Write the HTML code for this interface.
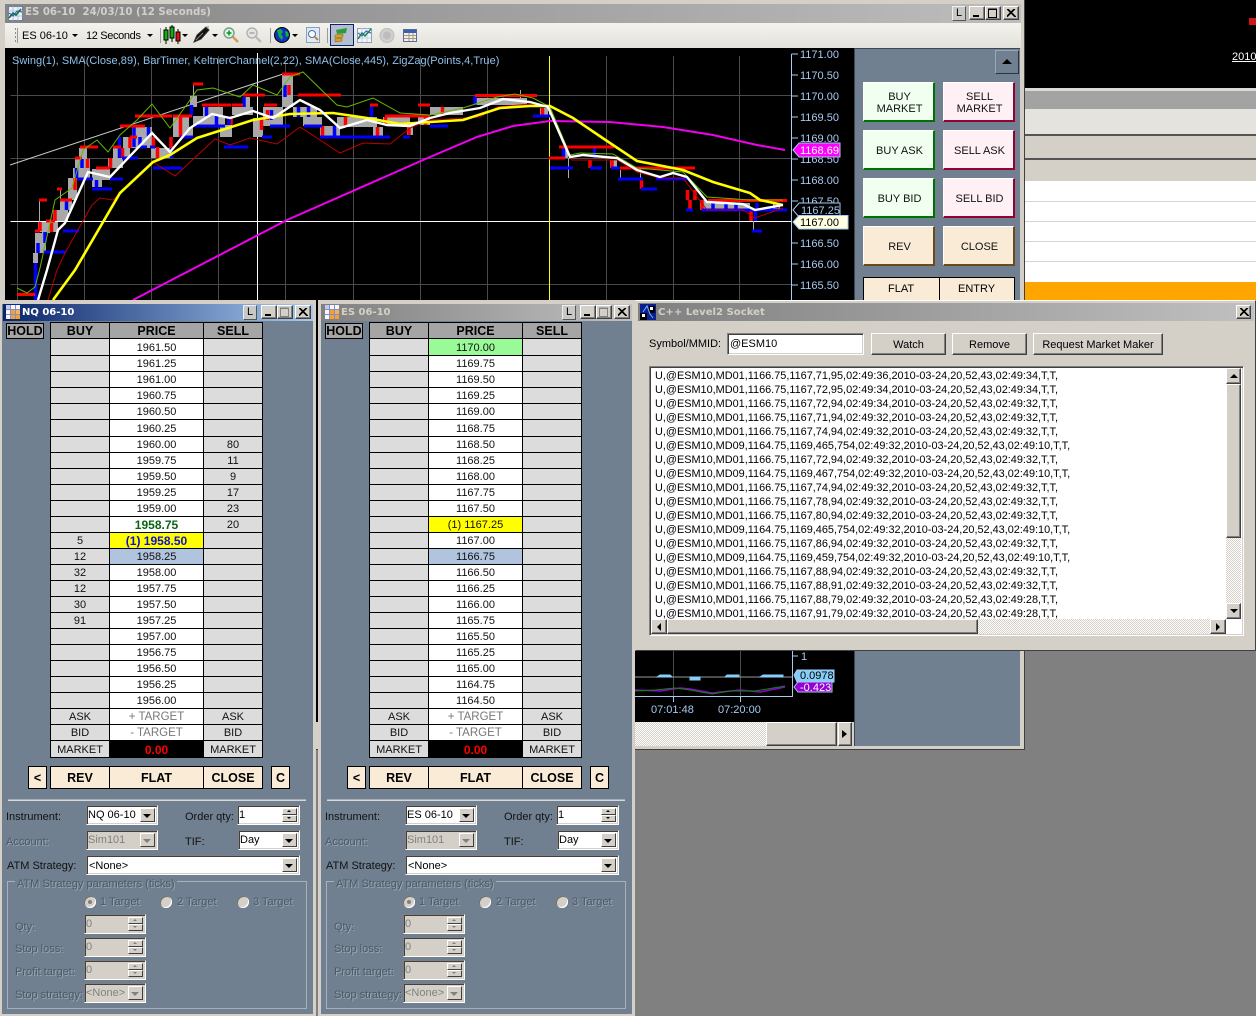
<!DOCTYPE html>
<html><head><meta charset="utf-8"><title>Trading</title>
<style>
html,body{margin:0;padding:0;width:1256px;height:1016px;overflow:hidden;background:#808080}
body{position:relative;font:11px "Liberation Sans",sans-serif;color:#000}
div,span,table,svg{position:absolute}
td,th{position:static}
.t{white-space:nowrap;line-height:14px}
.r{border:1px solid;border-color:#fff #404040 #404040 #fff;box-shadow:inset -1px -1px #808080;background:#d4d0c8;box-sizing:border-box}
.s{border:1px solid;border-color:#808080 #fff #fff #808080;box-shadow:inset 1px 1px #404040,inset -1px -1px #d4d0c8;background:#fff;box-sizing:border-box}
.dis{background:#d4d0c8;color:#808080}
.v{left:1px;top:2px;white-space:nowrap;line-height:14px}
.n{left:2px;top:3px}
.ab{right:2px;top:2px;bottom:2px;width:15px;border:1px solid;border-color:#fff #404040 #404040 #fff;background:#d4d0c8;box-sizing:border-box}
.ab:after,.up:after,.dn:after{content:"";position:absolute;width:0;height:0;border-left:4px solid transparent;border-right:4px solid transparent;border-top:4px solid #000;left:2px;top:5px}
.dis .ab:after{border-top-color:#808080}
.sp{right:2px;top:2px;width:15px;height:14px}
.up,.dn{left:0;width:15px;height:7px;background:#d4d0c8;border:1px solid;border-color:#fff #404040 #404040 #fff;box-sizing:border-box}
.up{top:0}.dn{top:7px}
.up:after{border-left-width:2px;border-right-width:2px;border-top:0;border-bottom:2px solid #000;left:4px;top:1px}
.dn:after{border-left-width:2px;border-right-width:2px;border-top-width:2px;left:4px;top:1px}
.dis .up:after{border-bottom-color:#808080}.dis .dn:after{border-top-color:#808080}
.L{border:1px solid;border-color:#eee #555 #555 #eee;background:#c8c8c4;box-sizing:border-box;text-align:center;font-size:11px;line-height:13px;height:15px;width:14px}
.wb{width:16px;height:14px}
.lb{color:#111;white-space:nowrap;line-height:14px}
.d{color:#4d5866;text-shadow:1px 1px 0 rgba(190,200,210,.55);white-space:nowrap;line-height:14px}
table.g{border-spacing:1px;background:#000;table-layout:fixed;left:50px;top:322px;width:213px;border-collapse:separate}
table.g td{padding:2px 0 0;height:13px;line-height:13px;text-align:center;font-size:11px;background:#dcdcdc;overflow:hidden;color:#111}
table.g td:nth-child(1),table.g td:nth-child(3){width:58px}
table.g td:nth-child(2){width:93px;background:#fff}
table.g tr.hd td{background:#a5a5a5;font-weight:bold;font-size:12.5px;color:#000}
table.g tr.x td{height:14px}
table.g td.gt{color:#777;font-size:11.5px}
table.g td.mk{background:#000;color:#f00;font-weight:bold;font-size:12px}
.sl{color:#1d3f7c}
.hold{left:6px;top:323px;width:38px;height:16px;border:1px solid #000;background:#a5a5a5;box-sizing:border-box;font:bold 12.5px/15px "Liberation Sans",sans-serif;text-align:center}
.ob{top:766px;height:23px;background:#faebd7;border:1px solid #000;box-sizing:border-box;font:bold 12.5px/23px "Liberation Sans",sans-serif;text-align:center}
.btn{box-sizing:border-box;text-align:center;font-size:11px;line-height:12px;color:#111;border:1px solid;display:flex;align-items:center;justify-content:center;padding:2px 0 0 2px}
.bg{background:#f0fff0;border-color:#fff #007000 #007000 #fff;border-width:1px 2px 2px 1px}
.bp{background:#fff0f5;border-color:#fff #900030 #900030 #fff;border-width:1px 2px 2px 1px}
.ba{background:#faebd7;border-color:#fff #6b4a20 #6b4a20 #fff;border-width:1px 2px 2px 1px}
.tb{font-family:"DejaVu Sans",sans-serif;font-weight:bold;line-height:14px;white-space:nowrap}
.dz{background:conic-gradient(#fff 25%,#d4d0c8 0 50%,#fff 0 75%,#d4d0c8 0) 0 0/2px 2px}
.rad{width:12px;height:12px;border-radius:50%;background:#d4d0c8;box-shadow:inset 1px 1px #6d6d6d,inset -1px -1px #fff}
.pre{left:655px;color:#000;white-space:pre;font-size:10.9px;line-height:14px;letter-spacing:0}
svg text{font-family:"Liberation Sans",sans-serif;font-size:11px}
</style></head><body>

<!-- background right window -->
<div style="left:1024px;top:0;width:232px;height:300px;background:#000"></div>
<div style="left:1249px;top:18px;width:7px;height:7px;background:#d01515"></div>
<div class="t" style="left:1232px;top:50px;color:#fff;text-decoration:underline">2010</div>
<div style="left:1024px;top:88px;width:232px;height:3px;background:#dcdcd6"></div>
<div style="left:1024px;top:91px;width:232px;height:18px;background:#a3a3a3"></div>
<div style="left:1024px;top:109px;width:232px;height:26px;background:#e4e3de"></div>
<div style="left:1024px;top:134px;width:232px;height:2px;background:#555"></div>
<div style="left:1024px;top:136px;width:232px;height:23px;background:#d4d0c8"></div>
<div style="left:1024px;top:158px;width:232px;height:2px;background:#555"></div>
<div style="left:1024px;top:160px;width:232px;height:21px;background:#d4d0c8"></div>
<div style="left:1024px;top:181px;width:232px;height:101px;background:#fff"></div>
<div style="left:1024px;top:201px;width:232px;height:1px;background:#d4d4d4"></div>
<div style="left:1024px;top:221px;width:232px;height:1px;background:#d4d4d4"></div>
<div style="left:1024px;top:241px;width:232px;height:1px;background:#d4d4d4"></div>
<div style="left:1024px;top:261px;width:232px;height:1px;background:#d4d4d4"></div>
<div style="left:1024px;top:282px;width:232px;height:18px;background:#ffa500"></div>

<!-- chart window -->
<div style="left:0;top:0;width:1025px;height:750px;background:#d4d0c8;border-right:1px solid #404040;border-bottom:1px solid #404040;box-sizing:border-box"></div>
<div style="left:5px;top:4px;width:1016px;height:19px;background:linear-gradient(90deg,#858585,#bdbdbd)"></div>
<div style="left:5px;top:23px;width:1016px;height:25px;background:linear-gradient(#f4f3ee,#e2e1da)"></div>
<div style="left:5px;top:48px;width:849px;height:674px;background:#000"></div>
<div style="left:854px;top:48px;width:166px;height:698px;background:#708090;box-shadow:inset 1px 1px #3a4654"></div>

<svg style="left:8px;top:6px" width="15" height="15" viewBox="0 0 15 15"><rect x=".5" y=".5" width="14" height="14" fill="#eef" stroke="#6a7f9a"/><path d="M.5 5h14M.5 10h14M5 .5v14M10 .5v14" stroke="#b9c4d6"/><path d="M1 12l4-5 3 2 5-6" fill="none" stroke="#0a7a2a" stroke-width="1.6"/><path d="M1 7l4 3 4-5 5 1" fill="none" stroke="#2050c0"/></svg>
<div class="tb" style="left:25px;top:6px;color:#d4d0c8;font-size:10.2px">ES 06-10&nbsp; 24/03/10 (12 Seconds)</div>
<div class="L" style="left:952px;top:6px">L</div>
<div class="r wb" style="left:969px;top:6px"><svg style="left:3px;top:8px" width="7" height="2"><rect width="6" height="2"/></svg></div>
<div class="r wb" style="left:985px;top:6px"><svg style="left:2px;top:1px" width="10" height="10"><path d="M.5 1.500h8v8h-8zM0 1h9" fill="none" stroke="#000"/></svg></div>
<div class="r wb" style="left:1003px;top:6px"><svg style="left:3px;top:2px" width="9" height="8"><path d="M0 0l8 8M8 0l-8 8M1 0l8 8M7 0l-8 8" stroke="#000"/></svg></div>

<!-- toolbar -->
<svg style="left:5px;top:23px" width="420" height="25" viewBox="5 23 420 25">
<path d="M15.5 28v2M15.5 32v2M15.5 36v2M15.5 40v2" stroke="#8a8a8a"/>
<path d="M160.5 28v15M270.5 28v15M327.5 28v15M17.5 28v15" stroke="#9a9a96"/>
<path d="M72 34h6l-3 3zM147 34h6l-3 3zM182 34h6l-3 3zM212 34h6l-3 3zM292 34h6l-3 3z"/>
<path d="M166 27v17" stroke="#000"/><rect x="164" y="30" width="4" height="10" fill="#10b010" stroke="#000"/>
<path d="M172 25v17" stroke="#000"/><rect x="170" y="27" width="4" height="11" fill="#10b010" stroke="#000"/>
<path d="M178 29v15" stroke="#000"/><rect x="176" y="32" width="4" height="9" fill="#e01010" stroke="#000"/>
<path d="M194 42l3-7 9-8 3 3-8 9z" fill="#111" stroke="#333"/><path d="M206 27l3-1-1 3" fill="#999"/><path d="M196 40l7-7" stroke="#888"/>
<circle cx="229" cy="33" r="5" fill="#e2f4e6" stroke="#7a9a8a" stroke-width="1.4"/><path d="M226.500 33h5M229 30.500v5" stroke="#0a9a20" stroke-width="1.6"/><path d="M233 37l5 5" stroke="#d99a50" stroke-width="2.4"/>
<circle cx="252" cy="33" r="5" fill="#e4e4e4" stroke="#b0b0b0" stroke-width="1.4"/><path d="M249.500 33h5" stroke="#aaa" stroke-width="1.6"/><path d="M256 37l5 5" stroke="#bbb" stroke-width="2.4"/>
<circle cx="282" cy="35" r="7.500" fill="#1030c0" stroke="#000"/><path d="M277 30l4-1 2 3-2 2 2 3-1 3-3-3zM285 31l3 1 1 4-3 1z" fill="#10b040"/>
<rect x="306.500" y="27.500" width="13" height="15" fill="#dfeaf5" stroke="#8aa0c0"/><circle cx="312" cy="34" r="3.500" fill="#fff" stroke="#4070a0"/><path d="M315 37l3 3" stroke="#d08030" stroke-width="2"/>
<rect x="330.500" y="24.500" width="23" height="21" fill="#b5bdd2" stroke="#0a246a"/>
<path d="M336 30l11-2-1 5-9 1z" fill="#2a9a3a"/><path d="M335 35l8-1v3l-8 1zM335 39l7-1v3l-7 1z" fill="#d8a020" stroke="#8a6010" stroke-width=".5"/>
<rect x="357.500" y="28.500" width="14" height="14" fill="#f2f4fa" stroke="#8fa0ba"/><path d="M358 33h13M358 38h13M362 28v14M367 28v14" stroke="#c6cedd"/><path d="M358 39l4-6 3 3 6-7" fill="none" stroke="#0a8a40" stroke-width="1.4"/><path d="M358 33l4 3 4-5 5 2" fill="none" stroke="#3060c0"/>
<circle cx="387" cy="35.500" r="7" fill="#cfcfcf" stroke="#bcbcbc"/><circle cx="387" cy="35.500" r="4" fill="#bdbdbd"/>
<rect x="403.500" y="29.500" width="13" height="12" fill="#f4efe0" stroke="#5a6a9a"/><rect x="404" y="30" width="12" height="3" fill="#3a60b0"/><path d="M404 35.500h12M404 38.500h12M409 33v8M413 33v8" stroke="#a09a8a"/>
</svg>
<div class="t" style="left:22px;top:29px">ES 06-10</div>
<div class="t" style="left:86px;top:29px;letter-spacing:-.35px">12 Seconds</div>

<!-- chart -->
<svg style="left:0;top:0" width="856" height="750" viewBox="0 0 856 750">
<g stroke="#4a4a4a" fill="none">
<path d="M10.500 95.500H791M10.500 158.500H791M10.500 284.500H791"/>
<path d="M17.500 56V300M84.500 56V300M151.500 56V300M218.500 56V300M285.500 56V300M353.500 56V300M420.500 56V300M487.500 56V300M606.500 56V300M673.500 56V300M739.500 56V300"/>
<path d="M673.500 650V697M740.500 650V697"/>
</g>
<path d="M10.500 221.500H791" stroke="#fff"/>
<path d="M257.500 53V300" stroke="#fff"/>
<path d="M549.500 56V300" stroke="#ff0"/>
<path d="M10 165L283 74" stroke="#c8c8c8" stroke-width="1"/>

<!-- wicks -->
<path d="M39.500 200V222M60.500 189V200M118.500 137V147M193.500 85V100M285.500 74V90M568.500 158V178M620.500 170V180M694.500 190V200M753.500 221V231M520.500 90V98M640.500 168V178M113.500 147V158" stroke="#aaa" fill="none"/>
<!-- gray blocks -->
<path fill="#a9a9a9" d="M33 253h5v10h-5zM35 233h11v20h-11zM38 222h4v10h-4zM42 222h8v11h-8zM46 222h12v10h-12zM53 210h15v11h-15zM60 201h12v9h-12zM68 178h9v22h-9zM73 168h17v10h-17zM75 159h15v9h-15zM79 148h8v11h-8zM92 169h18v11h-18zM92 180h10v7h-10zM108 158h15v10h-15zM113 148h17v10h-17zM123 137h29v11h-29zM132 127h20v10h-20zM151 148h22v10h-22zM173 127h20v10h-20zM173 117h16v10h-16zM190 96h7v11h-7zM193 116h32v10h-32zM203 107h20v9h-20zM220 125h12v12h-12zM232 107h21v8h-21zM243 97h7v10h-7zM253 118h10v19h-10zM263 107h20v19h-20zM282 75h11v32h-11zM293 107h24v10h-24zM303 117h19v9h-19zM320 126h20v11h-20zM337 117h40v10h-40zM373 127h10v10h-10zM383 117h27v8h-27zM407 127h6v8h-6zM418 115h12v10h-12zM430 107h33v8h-33zM475 98h52v7h-52zM540 108h8v7h-8zM562 148h6v10h-6zM610 160h7v8h-7zM700 200h7v10h-7zM707 203h43v7h-43zM773 203h7v7h-7z"/>
<!-- red bars -->
<path fill="none" stroke="#f00" stroke-width="3.500" d="M40 222V231M51.500 223V232M55 210V221M75 178V190M87.500 159V168M110.500 158V168M122.500 148V158M130 137V148M153.500 137V147M157.500 147V158M171 137V148M180.500 117V137M231 116V125M261.500 118V130M267.500 110V120M289 85V95M322.500 126V137M345.500 117V127M377.500 127V137M385.500 117V125M409 127V135M425.500 115V125M442.500 107V115M542.500 108V115M590 160V168M612 160V168M641.500 180V189M687.500 190V200M690 200V210M695 190V200M702 200V210M751 210V221M777.500 205V208"/>
<!-- blue bars -->
<path fill="none" stroke="#00f" stroke-width="3.500" d="M35.500 263V300M38 243V253M45 232V243M66.500 200V210M76.500 168V178M82 159V168M96.500 180V187M119.500 137V158M134 127V147M140 137V147M148.500 127V137M171.500 148V158M191.500 105V115M206.500 107V116M216.500 116V126M229 116V125M244 97V107M271.500 110V120M285 85V97M298.500 107V117M308.500 107V117M334.500 126V137M371.500 105V117M475 96V105M563.500 148V158M594.500 148V158M713 203V210M726 203V210M736 203V210M755.500 210V221M757 203V210M776.500 203V208"/>
<!-- red dashes -->
<path fill="none" stroke="#f00" stroke-width="3" d="M17 294.500H35M35 231H40M46 221H55M39 200H47M57 189H62M60 200H72M75 158H82M80 147H98M96 168H110M113 147H121M130 137H137M120 126H145M135 116H172M173 116H192M193 84H203M202 105H231M232 105H243M243 95H265M264 105H277M282 74H300M298 95H341M370 105H378M418 105H430M385 116H430M475 95.500H537M559 147H614M549 158H565M620 168H695M708 200.500H787"/>
<!-- blue dashes -->
<path fill="none" stroke="#00f" stroke-width="3" d="M43 252H66M63 231H79M77 179H93M92 189H112M110 179H123M122 158H138M140 147H147M150 147H155M153 168H182M180 137H193M195 126H225M224 147H248M262 137H272M270 126H290M304 126H322M320 137H390M403 137H410M430 126H448M533 116H550M550 168H573M590 168H602M611 168H620M618 179H643M641 189H657M656 179H687M686 210H693M702 210H787M752 231H762"/>
<!-- lines -->
<polyline fill="none" stroke="#b80000" stroke-width="1" points="48,300 57,270 65,253 92,205 100,198 113,200 153,162 175,176 215,139 230,145 250,138 277,144 300,127 340,153 363,143 390,144 410,128 430,120 480,117 497,107 530,104 550,108 572,160 617,160 637,172 660,178 683,178 707,210 743,210 755,218 783,208"/>
<polyline fill="none" stroke="#66b800" stroke-width="1" points="17,288 27,293 35,287 40,268 55,200 72,188 83,150 97,140 108,152 120,135 137,120 152,104 170,128 190,100 197,90 213,88 240,97 253,85 277,95 290,77 303,72 337,105 347,107 373,98 400,113 430,115 463,108 497,97 515,94 533,98 550,107 570,155 580,153 613,154 637,168 683,172 707,197 750,200 783,200"/>
<polyline fill="none" stroke="#f000f0" stroke-width="2" points="133,300 287,220 430,157 477,137 513,126 550,121 610,122 663,127 713,135 757,145 785,150"/>
<polyline fill="none" stroke="#ffff00" stroke-width="2.600" points="53,300 75,270 120,193 153,162 170,155 197,138 222,130 253,120 290,114 333,113 367,118 400,124 430,122 463,120 500,108 530,106 550,106 573,118 610,143 637,161 683,170 713,182 750,193 760,200 783,205"/>
<polyline fill="none" stroke="#fff" stroke-width="2.400" points="38,300 47,270 58,230 65,223 88,172 110,177 152,133 170,152 190,128 212,114 230,118 253,111 273,118 300,100 320,110 340,128 367,120 387,125 410,126 430,118 450,113 480,108 503,99 530,102 548,107 570,157 583,155 617,158 637,170 660,177 673,173 687,177 707,202 743,204 755,210 783,205"/>

<text x="12" y="64" fill="#8fc0ea" letter-spacing=".03">Swing(1), SMA(Close,89), BarTimer, KeltnerChannel(2,22), SMA(Close,445), ZigZag(Points,4,True)</text>

<!-- axis -->
<path d="M791.500 54V300M791.500 54H798M791.500 75H798M791.500 96H798M791.500 117H798M791.500 138H798M791.500 159H798M791.500 180H798M791.500 201H798M791.500 243H798M791.500 264H798M791.500 285H798" stroke="#a6caf0" fill="none"/>
<g fill="#a6caf0">
<text x="800" y="58">1171.00</text><text x="800" y="79">1170.50</text><text x="800" y="100">1170.00</text><text x="800" y="121">1169.50</text><text x="800" y="142">1169.00</text><text x="800" y="163">1168.50</text><text x="800" y="184">1168.00</text><text x="800" y="205">1167.50</text><text x="800" y="247">1166.50</text><text x="800" y="268">1166.00</text><text x="800" y="289">1165.50</text>
</g>
<polygon points="793,150 799,143 840,143 840,157 799,157" fill="#ff00ff" stroke="#a6caf0"/><text x="800" y="154" fill="#fff">1168.69</text>
<polygon points="793,210 799,203 840,203 840,217 799,217" fill="#000" stroke="#a6caf0"/><text x="801" y="214" fill="#a6caf0">1167.25</text>
<polygon points="793,222 799,215.500 848,215.500 848,229 799,229" fill="#ffffe1" stroke="#a6caf0"/><text x="800" y="226" fill="#000">1167.00</text>

<!-- lower chart piece -->
<path d="M635 696.500H792M792.500 650V697M792.500 656H798" stroke="#a6caf0" fill="none"/>
<path d="M673.500 697V702M740.500 697V702" stroke="#a6caf0"/>
<text x="801" y="660" fill="#a6caf0">1</text>
<path d="M635 677H792" stroke="#999"/>
<path d="M657 677l3-2h10l2 2zM690 677v3h10v-3zM725 677l2-2h12v2zM760 677l3-2h20v2z" fill="#87cefa" stroke="#87cefa"/>
<polyline fill="none" stroke="#9400d3" stroke-width="1.5" points="635,690 660,691 680,688 690,689 712,693 740,690 760,692 785,687"/>
<polyline fill="none" stroke="#0a8a0a" stroke-width="1" points="635,691 655,690 675,688 690,690 712,694 730,691 755,691 785,686"/>
<text x="651" y="713" fill="#a6caf0">07:01:48</text><text x="718" y="713" fill="#a6caf0">07:20:00</text>
<polygon points="794,675 797,670 834,670 834,682 797,682" fill="#87cefa" stroke="#a6caf0"/><text x="800" y="679" fill="#000">0.0978</text>
<polygon points="794,687 798,682 832,682 832,692 798,692" fill="#9400d3" stroke="#a6caf0"/><text x="800" y="691" fill="#fff">-0.423</text>
</svg>

<!-- lower chart scrollbar -->
<div class="dz" style="left:635px;top:722px;width:131px;height:24px"></div>
<div class="r" style="left:766px;top:722px;width:71px;height:24px"></div>
<div class="r" style="left:838px;top:722px;width:14px;height:24px"><svg style="left:3px;top:7px" width="6" height="8"><path d="M0 0l5 4-5 4z"/></svg></div>

<!-- side panel buttons -->
<div class="r" style="left:995px;top:50px;width:24px;height:24px;background:#708090;border-color:#9aa8b6 #2b3440 #2b3440 #9aa8b6;box-shadow:none"><svg style="left:6px;top:8px" width="10" height="6"><path d="M5 0l5 5H0z"/></svg></div>
<div class="btn bg" style="left:863px;top:82px;width:72px;height:40px">BUY<br>MARKET</div>
<div class="btn bp" style="left:943px;top:82px;width:72px;height:40px">SELL<br>MARKET</div>
<div class="btn bg" style="left:863px;top:130px;width:72px;height:40px">BUY ASK</div>
<div class="btn bp" style="left:943px;top:130px;width:72px;height:40px">SELL ASK</div>
<div class="btn bg" style="left:863px;top:178px;width:72px;height:40px">BUY BID</div>
<div class="btn bp" style="left:943px;top:178px;width:72px;height:40px">SELL BID</div>
<div class="btn ba" style="left:863px;top:226px;width:72px;height:40px">REV</div>
<div class="btn ba" style="left:943px;top:226px;width:72px;height:40px">CLOSE</div>
<div style="left:863px;top:277px;width:152px;height:30px;background:#faebd7;border:1px solid #000;box-sizing:border-box"></div>
<div style="left:939px;top:277px;width:1px;height:30px;background:#000"></div>
<div class="t" style="left:888px;top:282px;font-size:11px">FLAT</div>
<div class="t" style="left:958px;top:282px;font-size:11px">ENTRY</div>

<!-- window 1 frame -->
<div style="left:0;top:300px;width:316px;height:716px;background:#708090;border:solid #d4d0c8;border-width:4px 3px 2px 2px;box-sizing:border-box"></div>
<div style="left:3px;top:304px;width:310px;height:17px;background:linear-gradient(90deg,#0a246a,#a6caf0)"></div>
<svg style="left:6px;top:305px" width="14" height="14" viewBox="0 0 14 14"><rect width="14" height="14" fill="#f7f7ff"/><path d="M0 4.500h14M0 9.500h14M4.500 0v14M9.500 0v14" stroke="#8090c8"/><rect x="5" y="5" width="4" height="4" fill="#f7a030"/><rect x="0" y="0" width="4" height="4" fill="#c8c8f0"/><rect x="10" y="10" width="4" height="4" fill="#f7a030"/><rect x="5" y="10" width="4" height="4" fill="#f7a030"/><rect x="10" y="5" width="4" height="4" fill="#f7b060"/></svg>
<div class="tb" style="left:22px;top:306px;color:#fff;font-size:10px">NQ 06-10</div>

<!-- window 2 frame -->
<div style="left:318px;top:300px;width:317px;height:716px;background:#708090;border:solid #d4d0c8;border-width:4px 3px 2px 3px;box-sizing:border-box"></div>
<div style="left:321px;top:304px;width:311px;height:17px;background:linear-gradient(90deg,#808080,#c0c0c0)"></div>
<svg style="left:325px;top:305px" width="14" height="14" viewBox="0 0 14 14"><rect width="14" height="14" fill="#f7f7ff"/><path d="M0 4.500h14M0 9.500h14M4.500 0v14M9.500 0v14" stroke="#8090c8"/><rect x="5" y="5" width="4" height="4" fill="#f7a030"/><rect x="0" y="0" width="4" height="4" fill="#c8c8f0"/><rect x="10" y="10" width="4" height="4" fill="#f7a030"/><rect x="5" y="10" width="4" height="4" fill="#f7a030"/><rect x="10" y="5" width="4" height="4" fill="#f7b060"/></svg>
<div class="tb" style="left:341px;top:306px;color:#d4d0c8;font-size:10px">ES 06-10</div>

<!-- NQ content -->
<div style="left:0;top:0;width:316px;height:1016px">
<div class="L" style="left:243px;top:305px">L</div>
<div class="r wb" style="left:261px;top:305px"><svg style="left:3px;top:8px" width="7" height="2"><rect width="6" height="2"/></svg></div>
<div class="r wb" style="left:277px;top:305px"><svg style="left:2px;top:1px" width="10" height="10"><path d="M.5 1.500h8v8h-8z" fill="none" stroke="#808080"/><path d="M0 1h9" stroke="#808080"/></svg></div>
<div class="r wb" style="left:295px;top:305px"><svg style="left:3px;top:2px" width="9" height="8"><path d="M0 0l8 8M8 0l-8 8M1 0l8 8M7 0l-8 8" stroke="#000"/></svg></div>
<div class="hold">HOLD</div>
<table class="g">
<tr class="hd"><td>BUY</td><td>PRICE</td><td>SELL</td></tr>
<tr class="x"><td></td><td>1961.50</td><td></td></tr>
<tr><td></td><td>1961.25</td><td></td></tr>
<tr><td></td><td>1961.00</td><td></td></tr>
<tr><td></td><td>1960.75</td><td></td></tr>
<tr><td></td><td>1960.50</td><td></td></tr>
<tr class="x"><td></td><td>1960.25</td><td></td></tr>
<tr><td></td><td>1960.00</td><td class="sl">80</td></tr>
<tr><td></td><td>1959.75</td><td class="sl">11</td></tr>
<tr><td></td><td>1959.50</td><td class="sl">9</td></tr>
<tr><td></td><td>1959.25</td><td class="sl">17</td></tr>
<tr><td></td><td>1959.00</td><td class="sl">23</td></tr>
<tr><td></td><td style="font-weight:bold;color:#0a6414;font-size:12px">1958.75</td><td class="sl">20</td></tr>
<tr><td>5</td><td style="background:#ff0;color:#1010d0;font-weight:bold;font-size:12px">(1) 1958.50</td><td></td></tr>
<tr><td>12</td><td style="background:#b0c4de">1958.25</td><td></td></tr>
<tr><td>32</td><td>1958.00</td><td></td></tr>
<tr><td>12</td><td>1957.75</td><td></td></tr>
<tr><td>30</td><td>1957.50</td><td></td></tr>
<tr><td>91</td><td>1957.25</td><td></td></tr>
<tr><td></td><td>1957.00</td><td></td></tr>
<tr><td></td><td>1956.75</td><td></td></tr>
<tr><td></td><td>1956.50</td><td></td></tr>
<tr><td></td><td>1956.25</td><td></td></tr>
<tr><td></td><td>1956.00</td><td></td></tr>
<tr><td>ASK</td><td class="gt">+ TARGET</td><td>ASK</td></tr>
<tr><td>BID</td><td class="gt">- TARGET</td><td>BID</td></tr>
<tr class="x"><td>MARKET</td><td class="mk">0.00</td><td>MARKET</td></tr>
</table>
<div class="ob" style="left:28px;width:19px">&lt;</div>
<div class="ob" style="left:50px;width:60px">REV</div>
<div class="ob" style="left:109px;width:95px">FLAT</div>
<div class="ob" style="left:203px;width:60px">CLOSE</div>
<div class="ob" style="left:271px;width:19px">C</div>
<div style="left:8px;top:799px;width:298px;height:1px;background:#a7aeb6;border-bottom:1px solid #d8d8d8"></div>
<div class="lb" style="left:6px;top:810px">Instrument:</div>
<div class="s" style="left:86px;top:805px;width:72px;height:20px"><span class="v">NQ 06-10</span><span class="ab"></span></div>
<div class="lb" style="left:185px;top:810px">Order qty:</div>
<div class="s" style="left:237px;top:805px;width:63px;height:20px"><span class="v">1</span><span class="sp"><span class="up"></span><span class="dn"></span></span></div>
<div class="d" style="left:6px;top:835px">Account:</div>
<div class="s dis" style="left:86px;top:830px;width:72px;height:20px"><span class="v">Sim101</span><span class="ab"></span></div>
<div class="lb" style="left:185px;top:835px">TIF:</div>
<div class="s" style="left:238px;top:830px;width:62px;height:20px"><span class="v">Day</span><span class="ab"></span></div>
<div class="lb" style="left:7px;top:859px">ATM Strategy:</div>
<div class="s" style="left:86px;top:855px;width:214px;height:20px"><span class="v n">&lt;None&gt;</span><span class="ab"></span></div>
<div style="left:7px;top:881px;width:300px;height:128px;border:1px solid #a8b0b8;box-sizing:border-box"></div>
<div class="d" style="left:15px;top:877px;background:#708090;padding:0 2px">ATM Strategy parameters (ticks)</div>
<div class="rad" style="left:84px;top:896px"></div><div style="left:88px;top:900px;width:4px;height:4px;border-radius:50%;background:#808080"></div>
<div class="d" style="left:100px;top:895px">1 Target</div>
<div class="rad" style="left:160px;top:896px"></div><div class="d" style="left:177px;top:895px">2 Target</div>
<div class="rad" style="left:237px;top:896px"></div><div class="d" style="left:253px;top:895px">3 Target</div>
<div class="d" style="left:15px;top:920px">Qty:</div>
<div class="s dis" style="left:84px;top:914px;width:62px;height:20px"><span class="v">0</span><span class="sp"><span class="up"></span><span class="dn"></span></span></div>
<div class="d" style="left:15px;top:942px">Stop loss:</div>
<div class="s dis" style="left:84px;top:937px;width:62px;height:20px"><span class="v">0</span><span class="sp"><span class="up"></span><span class="dn"></span></span></div>
<div class="d" style="left:15px;top:965px">Profit target:</div>
<div class="s dis" style="left:84px;top:960px;width:62px;height:20px"><span class="v">0</span><span class="sp"><span class="up"></span><span class="dn"></span></span></div>
<div class="d" style="left:15px;top:988px">Stop strategy:</div>
<div class="s dis" style="left:84px;top:983px;width:62px;height:20px"><span class="v">&lt;None&gt;</span><span class="ab"></span></div>
</div>

<!-- ES content -->
<div style="left:319px;top:0;width:316px;height:1016px">
<div class="L" style="left:243px;top:305px">L</div>
<div class="r wb" style="left:261px;top:305px"><svg style="left:3px;top:8px" width="7" height="2"><rect width="6" height="2"/></svg></div>
<div class="r wb" style="left:277px;top:305px"><svg style="left:2px;top:1px" width="10" height="10"><path d="M.5 1.500h8v8h-8z" fill="none" stroke="#808080"/><path d="M0 1h9" stroke="#808080"/></svg></div>
<div class="r wb" style="left:295px;top:305px"><svg style="left:3px;top:2px" width="9" height="8"><path d="M0 0l8 8M8 0l-8 8M1 0l8 8M7 0l-8 8" stroke="#000"/></svg></div>
<div class="hold">HOLD</div>
<table class="g">
<tr class="hd"><td>BUY</td><td>PRICE</td><td>SELL</td></tr>
<tr class="x"><td></td><td style="background:#98fb98">1170.00</td><td></td></tr>
<tr><td></td><td>1169.75</td><td></td></tr>
<tr><td></td><td>1169.50</td><td></td></tr>
<tr><td></td><td>1169.25</td><td></td></tr>
<tr><td></td><td>1169.00</td><td></td></tr>
<tr class="x"><td></td><td>1168.75</td><td></td></tr>
<tr><td></td><td>1168.50</td><td></td></tr>
<tr><td></td><td>1168.25</td><td></td></tr>
<tr><td></td><td>1168.00</td><td></td></tr>
<tr><td></td><td>1167.75</td><td></td></tr>
<tr><td></td><td>1167.50</td><td></td></tr>
<tr><td></td><td style="background:#ff0">(1) 1167.25</td><td></td></tr>
<tr><td></td><td>1167.00</td><td></td></tr>
<tr><td></td><td style="background:#b0c4de">1166.75</td><td></td></tr>
<tr><td></td><td>1166.50</td><td></td></tr>
<tr><td></td><td>1166.25</td><td></td></tr>
<tr><td></td><td>1166.00</td><td></td></tr>
<tr><td></td><td>1165.75</td><td></td></tr>
<tr><td></td><td>1165.50</td><td></td></tr>
<tr><td></td><td>1165.25</td><td></td></tr>
<tr><td></td><td>1165.00</td><td></td></tr>
<tr><td></td><td>1164.75</td><td></td></tr>
<tr><td></td><td>1164.50</td><td></td></tr>
<tr><td>ASK</td><td class="gt">+ TARGET</td><td>ASK</td></tr>
<tr><td>BID</td><td class="gt">- TARGET</td><td>BID</td></tr>
<tr class="x"><td>MARKET</td><td class="mk">0.00</td><td>MARKET</td></tr>
</table>
<div class="ob" style="left:28px;width:19px">&lt;</div>
<div class="ob" style="left:50px;width:60px">REV</div>
<div class="ob" style="left:109px;width:95px">FLAT</div>
<div class="ob" style="left:203px;width:60px">CLOSE</div>
<div class="ob" style="left:271px;width:19px">C</div>
<div style="left:8px;top:799px;width:298px;height:1px;background:#a7aeb6;border-bottom:1px solid #d8d8d8"></div>
<div class="lb" style="left:6px;top:810px">Instrument:</div>
<div class="s" style="left:86px;top:805px;width:72px;height:20px"><span class="v">ES 06-10</span><span class="ab"></span></div>
<div class="lb" style="left:185px;top:810px">Order qty:</div>
<div class="s" style="left:237px;top:805px;width:63px;height:20px"><span class="v">1</span><span class="sp"><span class="up"></span><span class="dn"></span></span></div>
<div class="d" style="left:6px;top:835px">Account:</div>
<div class="s dis" style="left:86px;top:830px;width:72px;height:20px"><span class="v">Sim101</span><span class="ab"></span></div>
<div class="lb" style="left:185px;top:835px">TIF:</div>
<div class="s" style="left:238px;top:830px;width:62px;height:20px"><span class="v">Day</span><span class="ab"></span></div>
<div class="lb" style="left:7px;top:859px">ATM Strategy:</div>
<div class="s" style="left:86px;top:855px;width:214px;height:20px"><span class="v n">&lt;None&gt;</span><span class="ab"></span></div>
<div style="left:7px;top:881px;width:300px;height:128px;border:1px solid #a8b0b8;box-sizing:border-box"></div>
<div class="d" style="left:15px;top:877px;background:#708090;padding:0 2px">ATM Strategy parameters (ticks)</div>
<div class="rad" style="left:84px;top:896px"></div><div style="left:88px;top:900px;width:4px;height:4px;border-radius:50%;background:#808080"></div>
<div class="d" style="left:100px;top:895px">1 Target</div>
<div class="rad" style="left:160px;top:896px"></div><div class="d" style="left:177px;top:895px">2 Target</div>
<div class="rad" style="left:237px;top:896px"></div><div class="d" style="left:253px;top:895px">3 Target</div>
<div class="d" style="left:15px;top:920px">Qty:</div>
<div class="s dis" style="left:84px;top:914px;width:62px;height:20px"><span class="v">0</span><span class="sp"><span class="up"></span><span class="dn"></span></span></div>
<div class="d" style="left:15px;top:942px">Stop loss:</div>
<div class="s dis" style="left:84px;top:937px;width:62px;height:20px"><span class="v">0</span><span class="sp"><span class="up"></span><span class="dn"></span></span></div>
<div class="d" style="left:15px;top:965px">Profit target:</div>
<div class="s dis" style="left:84px;top:960px;width:62px;height:20px"><span class="v">0</span><span class="sp"><span class="up"></span><span class="dn"></span></span></div>
<div class="d" style="left:15px;top:988px">Stop strategy:</div>
<div class="s dis" style="left:84px;top:983px;width:62px;height:20px"><span class="v">&lt;None&gt;</span><span class="ab"></span></div>
</div>

<!-- Level 2 window -->
<div style="left:635px;top:300px;width:621px;height:351px;background:#d4d0c8;border:1px solid;border-color:#fff #404040 #404040 #d4d0c8;box-sizing:border-box"></div>
<div style="left:638px;top:303px;width:616px;height:18px;background:linear-gradient(90deg,#808080,#c0c0c0)"></div>
<svg style="left:640px;top:304px" width="16" height="16" viewBox="0 0 16 16"><rect width="16" height="16" fill="#0a2090"/><rect x="0" y="9" width="7" height="7" fill="#000"/><rect x="2" y="10" width="3" height="3" fill="#fff"/><rect x="9" y="2" width="6" height="7" fill="#000"/><rect x="10" y="3" width="3" height="3" fill="#fff"/><path d="M3 8l4-6 3 8 3 4" stroke="#7ab0ff" fill="none"/></svg>
<div class="tb" style="left:658px;top:306px;color:#d4d0c8;font-size:10.1px">C++ Level2 Socket</div>
<div class="r wb" style="left:1236px;top:305px;width:15px"><svg style="left:3px;top:2px" width="9" height="8"><path d="M0 0l8 8M8 0l-8 8M1 0l8 8M7 0l-8 8" stroke="#000"/></svg></div>
<div class="t" style="left:649px;top:337px">Symbol/MMID:</div>
<div class="s" style="left:727px;top:333px;width:137px;height:22px"><span class="v" style="top:3px;left:2px">@ESM10</span></div>
<div class="r t" style="left:871px;top:333px;width:75px;height:22px;text-align:center;line-height:22px">Watch</div>
<div class="r t" style="left:952px;top:333px;width:75px;height:22px;text-align:center;line-height:22px">Remove</div>
<div class="r t" style="left:1033px;top:333px;width:130px;height:22px;text-align:center;line-height:22px">Request Market Maker</div>
<div class="s" style="left:649px;top:366px;width:595px;height:270px"></div>
<div style="left:651px;top:368px;width:575px;height:251px;overflow:hidden">
<div class="pre" style="left:4px;top:1px">U,@ESM10,MD01,1166.75,1167,71,95,02:49:36,2010-03-24,20,52,43,02:49:34,T,T,
U,@ESM10,MD01,1166.75,1167,72,95,02:49:34,2010-03-24,20,52,43,02:49:34,T,T,
U,@ESM10,MD01,1166.75,1167,72,94,02:49:34,2010-03-24,20,52,43,02:49:32,T,T,
U,@ESM10,MD01,1166.75,1167,71,94,02:49:32,2010-03-24,20,52,43,02:49:32,T,T,
U,@ESM10,MD01,1166.75,1167,74,94,02:49:32,2010-03-24,20,52,43,02:49:32,T,T,
U,@ESM10,MD09,1164.75,1169,465,754,02:49:32,2010-03-24,20,52,43,02:49:10,T,T,
U,@ESM10,MD01,1166.75,1167,72,94,02:49:32,2010-03-24,20,52,43,02:49:32,T,T,
U,@ESM10,MD09,1164.75,1169,467,754,02:49:32,2010-03-24,20,52,43,02:49:10,T,T,
U,@ESM10,MD01,1166.75,1167,74,94,02:49:32,2010-03-24,20,52,43,02:49:32,T,T,
U,@ESM10,MD01,1166.75,1167,78,94,02:49:32,2010-03-24,20,52,43,02:49:32,T,T,
U,@ESM10,MD01,1166.75,1167,80,94,02:49:32,2010-03-24,20,52,43,02:49:32,T,T,
U,@ESM10,MD09,1164.75,1169,465,754,02:49:32,2010-03-24,20,52,43,02:49:10,T,T,
U,@ESM10,MD01,1166.75,1167,86,94,02:49:32,2010-03-24,20,52,43,02:49:32,T,T,
U,@ESM10,MD09,1164.75,1169,459,754,02:49:32,2010-03-24,20,52,43,02:49:10,T,T,
U,@ESM10,MD01,1166.75,1167,88,94,02:49:32,2010-03-24,20,52,43,02:49:32,T,T,
U,@ESM10,MD01,1166.75,1167,88,91,02:49:32,2010-03-24,20,52,43,02:49:32,T,T,
U,@ESM10,MD01,1166.75,1167,88,79,02:49:32,2010-03-24,20,52,43,02:49:28,T,T,
U,@ESM10,MD01,1166.75,1167,91,79,02:49:32,2010-03-24,20,52,43,02:49:28,T,T,</div>
</div>
<div class="dz" style="left:1226px;top:368px;width:15px;height:251px"></div>
<div class="r" style="left:1226px;top:368px;width:15px;height:16px"><svg style="left:3px;top:5px" width="8" height="5"><path d="M4 0l4 4H0z"/></svg></div>
<div class="r" style="left:1226px;top:384px;width:15px;height:154px"></div>
<div class="r" style="left:1226px;top:603px;width:15px;height:16px"><svg style="left:3px;top:5px" width="8" height="5"><path d="M0 0h8L4 4z"/></svg></div>
<div class="dz" style="left:651px;top:619px;width:575px;height:15px"></div>
<div class="r" style="left:651px;top:619px;width:16px;height:15px"><svg style="left:5px;top:3px" width="5" height="8"><path d="M4 0v8L0 4z"/></svg></div>
<div class="r" style="left:667px;top:619px;width:311px;height:15px"></div>
<div class="r" style="left:1210px;top:619px;width:16px;height:15px"><svg style="left:5px;top:3px" width="5" height="8"><path d="M0 0l4 4-4 4z"/></svg></div>
</body></html>
